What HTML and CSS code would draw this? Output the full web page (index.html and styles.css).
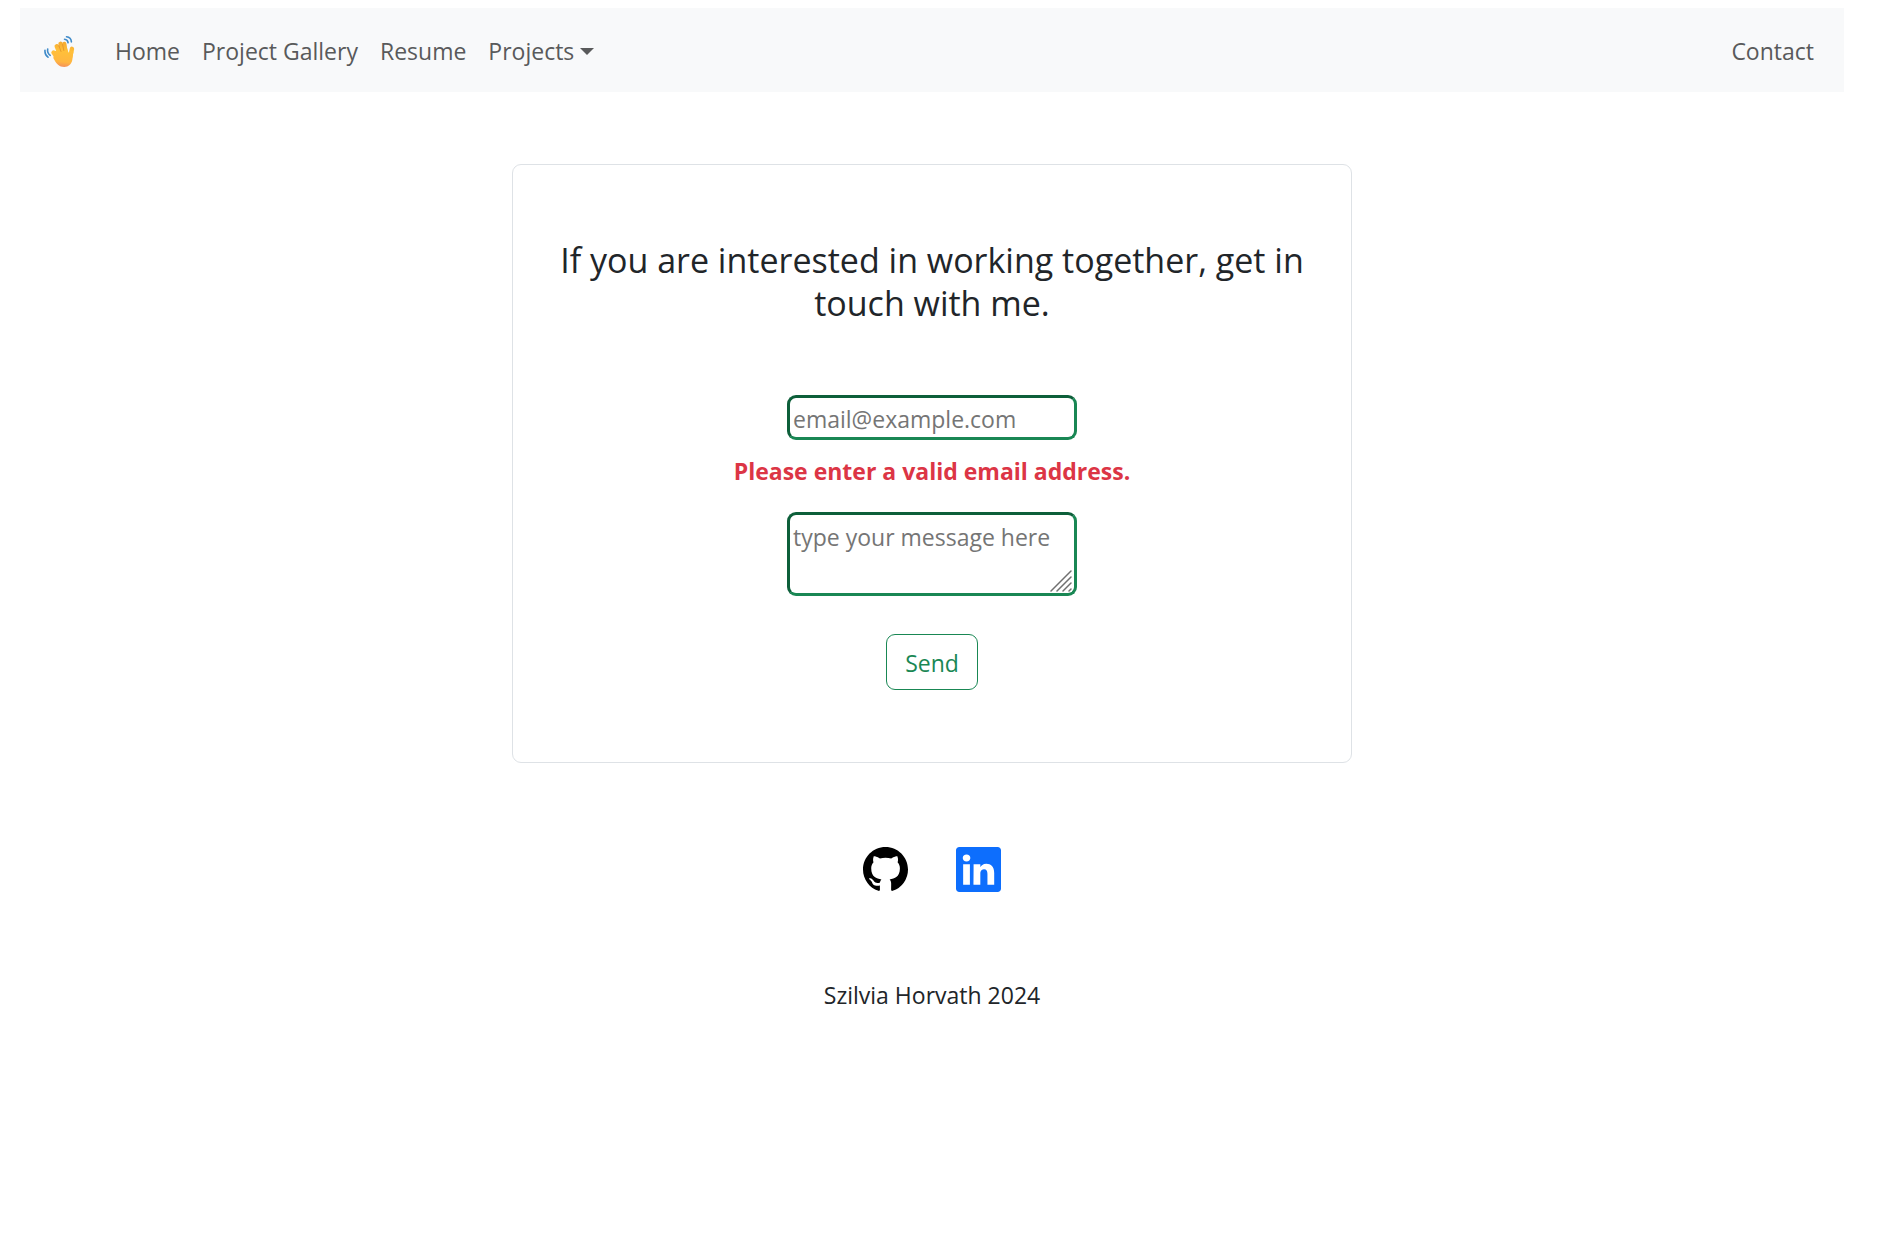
FILE: index.html
```html
<!DOCTYPE html>
<html lang="en">
<head>
  <meta charset="utf-8">
  <meta name="viewport" content="width=device-width, initial-scale=1">
  <title>Contact</title>
  <link rel="stylesheet" href="styles.css">
</head>
<body>
  <nav class="navbar">
    <a class="brand" href="#" aria-label="Start">
      <svg class="brand-icon" viewBox="0 0 32 32" aria-hidden="true">
        <defs>
          <linearGradient id="skin" gradientUnits="userSpaceOnUse" x1="20" y1="5" x2="17" y2="32">
            <stop offset="0" stop-color="#f3a52d"/>
            <stop offset="0.4" stop-color="#ffc03a"/>
            <stop offset="0.8" stop-color="#ffb640"/>
            <stop offset="1" stop-color="#f48f5c"/>
          </linearGradient>
        </defs>
        <g fill="none" stroke="#3f8bc9" stroke-width="1.6" stroke-linecap="round">
          <path d="M20.500 4.200c2 .2 3.400 1.600 3.600 3.600"/>
          <path d="M22.500 1.800c2.900.3 4.700 2.300 4.900 5.100"/>
          <path d="M3.700 14c-.5 2.600.4 4.800 2.500 6.300"/>
          <path d="M1 15.200c-.3 2.900.7 5.300 3 7"/>
        </g>
        <g fill="none" stroke="url(#skin)" stroke-width="4.400" stroke-linecap="round">
          <path d="M9.500 17.500l5 7"/>
          <path d="M12.700 11.300l4 10"/>
          <path d="M16.500 8.800l3 11"/>
          <path d="M20.300 9l1.500 10"/>
          <path d="M28 13.800l-2 9"/>
        </g>
        <path fill="url(#skin)" d="M11 16l12-3 1.500 4.500 5-1c-.5 3-.7 5-1.200 8.500-.8 4-3.700 7-8 7-5 0-8-3-11-9z"/>
        <g fill="none" stroke="#de8a28" stroke-width="0.700" stroke-linecap="round">
          <path d="M14.800 10.500l2.200 6"/>
          <path d="M18.600 9.500l1.200 6"/>
        </g>
      </svg>
    </a>
    <a class="nav-link" href="#">Home</a>
    <a class="nav-link" href="#">Project Gallery</a>
    <a class="nav-link" href="#">Resume</a>
    <button class="nav-link nav-toggle" type="button" aria-haspopup="true" aria-expanded="false">Projects<span class="caret"></span></button>
    <a class="nav-link nav-end" href="#">Contact</a>
  </nav>

  <main class="card">
    <h1 class="card-title">If you are interested in working together, get in touch with me.</h1>
    <form class="contact-form" novalidate>
      <input class="field field-email" type="email" placeholder="email@example.com" aria-label="Email" aria-describedby="email-error">
      <p class="error" id="email-error">Please enter a valid email address.</p>
      <div class="message">
        <textarea class="field field-message" placeholder="type your message here" aria-label="Message"></textarea>
        <svg class="grip" viewBox="0 0 22 22" aria-hidden="true"><path d="M1 21L21 1M7 21L21 7M13 21l8-8M19 21l2-2"/></svg>
      </div>
      <button class="send" type="submit">Send</button>
    </form>
  </main>

  <footer class="footer">
    <div class="social">
      <a class="social-link github" href="#" aria-label="GitHub">
        <svg class="social-icon" viewBox="0 0 16 16" aria-hidden="true"><path fill="currentColor" d="M8 0C3.580 0 0 3.580 0 8c0 3.540 2.290 6.530 5.470 7.590.4.070.55-.17.55-.38 0-.19-.01-.82-.01-1.490-2.010.37-2.530-.49-2.690-.94-.09-.23-.48-.94-.82-1.130-.28-.15-.68-.52-.01-.53.63-.01 1.080.58 1.230.82.72 1.210 1.870.87 2.330.66.07-.52.28-.87.51-1.070-1.780-.2-3.640-.89-3.640-3.950 0-.87.31-1.590.82-2.150-.08-.2-.36-1.020.08-2.120 0 0 .67-.21 2.200.82.64-.18 1.320-.27 2-.27s1.360.09 2 .27c1.530-1.040 2.200-.82 2.200-.82.44 1.100.16 1.920.08 2.120.51.56.82 1.270.82 2.150 0 3.070-1.870 3.750-3.650 3.950.29.25.54.73.54 1.480 0 1.070-.01 1.930-.01 2.200 0 .21.15.46.55.38A8.010 8.010 0 0 0 16 8c0-4.420-3.580-8-8-8"/></svg>
      </a>
      <a class="social-link linkedin" href="#" aria-label="LinkedIn">
        <svg class="social-icon" viewBox="0 0 16 16" aria-hidden="true"><path fill="currentColor" d="M0 1.146C0 .513.526 0 1.175 0h13.650C15.474 0 16 .513 16 1.146v13.708c0 .633-.526 1.146-1.175 1.146H1.175C.526 16 0 15.487 0 14.854zm4.943 12.248V6.169H2.542v7.225zm-1.200-8.212c.837 0 1.358-.554 1.358-1.248-.015-.709-.52-1.248-1.342-1.248S2.400 3.226 2.400 3.934c0 .694.521 1.248 1.327 1.248zm4.908 8.212V9.359c0-.216.016-.432.08-.586.173-.431.568-.878 1.232-.878.869 0 1.216.662 1.216 1.634v3.865h2.401V9.250c0-2.220-1.184-3.252-2.764-3.252-1.274 0-1.845.7-2.165 1.193v.025h-.016l.016-.025V6.169h-2.400c.03.678 0 7.225 0 7.225z"/></svg>
      </a>
    </div>
    <p class="copyright">Szilvia Horvath 2024</p>
  </footer>
</body>
</html>
```
FILE: styles.css
```css
* {
  box-sizing: border-box;
}

body {
  margin: 0;
  padding: 8px 57px 0 20px;
  background: #fff;
  color: #212529;
  font-family: "Segoe UI", "Open Sans", "Noto Sans", sans-serif;
  font-size: 23px;
  line-height: 36px;
}

.navbar {
  display: flex;
  align-items: center;
  min-height: 84px;
  padding: 2px 19px 0 24px;
  background: #f8f9fa;
}

.brand {
  display: flex;
  margin-right: 28px;
}

.brand-icon {
  width: 32px;
  height: 32px;
}

.nav-link {
  padding: 11px;
  border: 0;
  background: none;
  color: #595a5b;
  font: inherit;
  text-decoration: none;
}

.nav-toggle {
  display: flex;
  align-items: center;
  gap: 6px;
}

.caret {
  border-top: 7px solid;
  border-right: 7px solid transparent;
  border-left: 7px solid transparent;
}

.nav-end {
  margin-left: auto;
}

.card {
  width: 46%;
  margin: 72px auto 0;
  padding: 74px 24px 72px;
  border: 1px solid #dee2e6;
  border-radius: 9px;
  text-align: center;
}

.card-title {
  margin: 0 0 70px;
  padding: 0 12px;
  font-size: 34px;
  font-weight: 400;
  line-height: 43px;
}

.contact-form {
  display: flex;
  flex-direction: column;
  align-items: center;
}

.field {
  display: block;
  width: 290px;
  padding: 4px 3px 0;
  border: 3px solid;
  border-color: #0d5f3a #198754 #198754 #0d5f3a;
  border-radius: 9px;
  background: #fff;
  color: #212529;
  font: inherit;
}

.field::placeholder {
  color: #757575;
  opacity: 1;
}

.field-email {
  height: 45px;
  padding-top: 2px;
}

.error {
  margin: 13px 0 23px;
  color: #dc3545;
  font-weight: 700;
}

.message {
  position: relative;
}

.field-message {
  height: 84px;
  resize: none;
}

.grip {
  position: absolute;
  right: 5px;
  bottom: 4px;
  width: 22px;
  height: 22px;
  fill: none;
  stroke: #707070;
  stroke-width: 1.5;
  stroke-linecap: round;
  pointer-events: none;
}

.send {
  margin-top: 38px;
  padding: 10px 18px 8px;
  border: 1px solid #198754;
  border-radius: 9px;
  background: #fff;
  color: #198754;
  font: inherit;
}

.footer {
  display: flex;
  flex-direction: column;
  align-items: center;
  padding-top: 84px;
}

.social {
  display: flex;
  gap: 48px;
}

.social-link {
  display: flex;
}

.social-icon {
  width: 45px;
  height: 45px;
}

.github {
  color: #000;
}

.linkedin {
  color: #0d6efd;
}

.copyright {
  margin: 85px 0 0;
}
```
